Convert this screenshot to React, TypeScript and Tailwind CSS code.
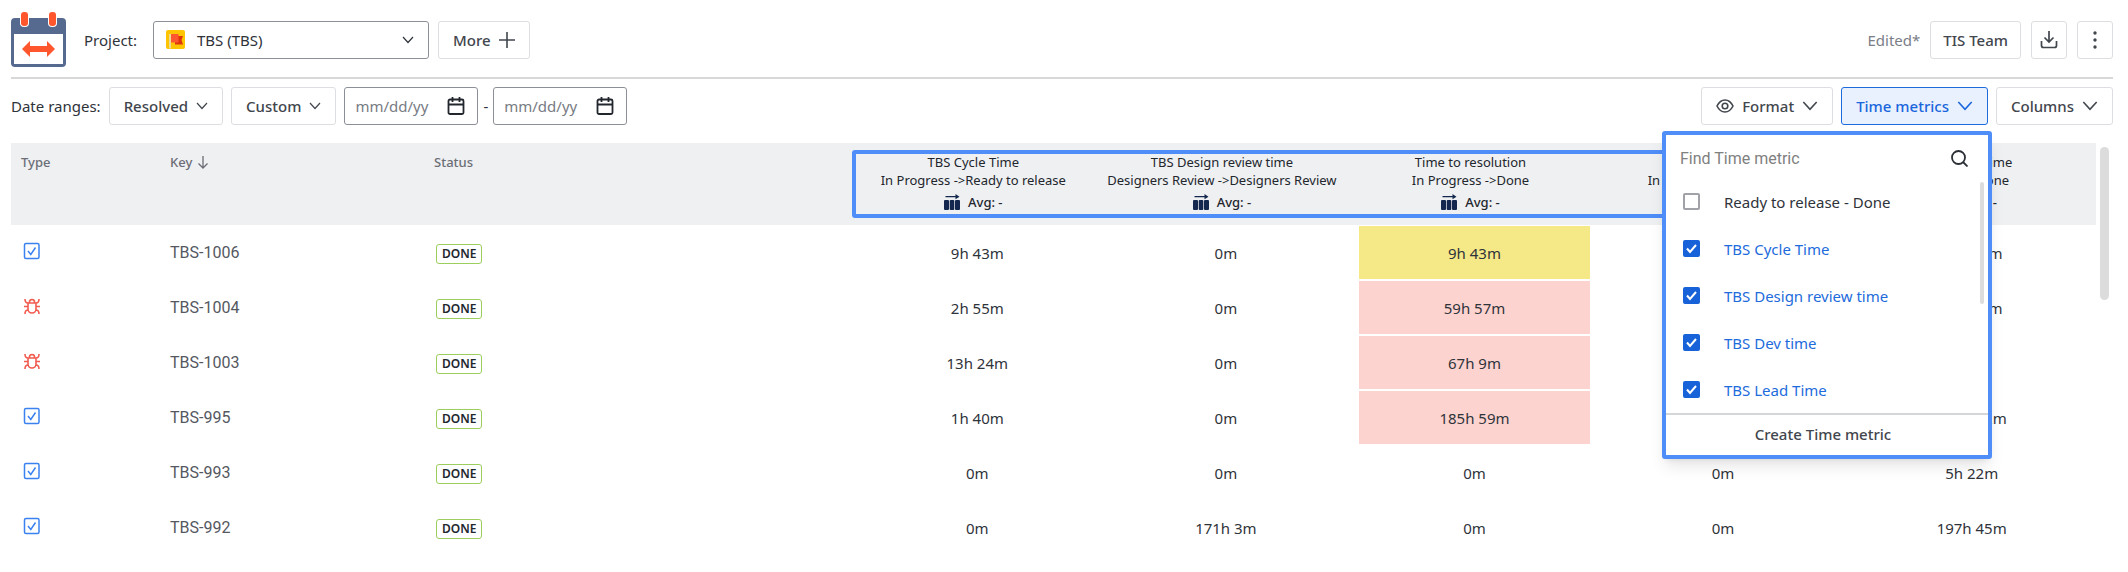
import { useState } from 'react';
import type { ReactNode } from 'react';

type Row = {
  type: 'task' | 'bug';
  key: string;
  times: string[];
  tone?: 'yellow' | 'red';
};

const metrics = [
  { name: 'TBS Cycle Time', range: 'In Progress ->Ready to release' },
  { name: 'TBS Design review time', range: 'Designers Review ->Designers Review' },
  { name: 'Time to resolution', range: 'In Progress ->Done' },
  { name: 'TBS Dev time', range: 'In Progress ->In Review' },
  { name: 'TBS Lead Time', range: 'To Do ->Done' },
];

const rows: Row[] = [
  { type: 'task', key: 'TBS-1006', times: ['9h 43m', '0m', '9h 43m', '0m', '10h 43m'], tone: 'yellow' },
  { type: 'bug', key: 'TBS-1004', times: ['2h 55m', '0m', '59h 57m', '0m', '62h 38m'], tone: 'red' },
  { type: 'bug', key: 'TBS-1003', times: ['13h 24m', '0m', '67h 9m', '0m', '0m'], tone: 'red' },
  { type: 'task', key: 'TBS-995', times: ['1h 40m', '0m', '185h 59m', '0m', '187h 42m'], tone: 'red' },
  { type: 'task', key: 'TBS-993', times: ['0m', '0m', '0m', '0m', '5h 22m'] },
  { type: 'task', key: 'TBS-992', times: ['0m', '171h 3m', '0m', '0m', '197h 45m'] },
];

const options = ['Ready to release - Done', 'TBS Cycle Time', 'TBS Design review time', 'TBS Dev time', 'TBS Lead Time'];

const Logo = () => (
  <svg width="55" height="55" viewBox="0 0 55 55" className="shrink-0">
    <rect x="0" y="6" width="55" height="49" rx="4" fill="#56698f" />
    <rect x="3" y="22" width="49" height="30" fill="#fff" />
    <rect x="9" y="-1" width="9" height="16" rx="4" fill="#fff" />
    <rect x="37" y="-1" width="9" height="16" rx="4" fill="#fff" />
    <rect x="10" y="0" width="7" height="14" rx="3" fill="#ff562d" />
    <rect x="38" y="0" width="7" height="14" rx="3" fill="#ff562d" />
    <path d="M11 37l8-8v5h17v-5l8 8-8 8v-5H19v5z" fill="#ff562d" />
  </svg>
);

const ProjectIcon = () => (
  <svg width="19" height="19" viewBox="0 0 19 19" className="shrink-0">
    <rect width="19" height="19" rx="2" fill="#ffc400" />
    <path d="M4 4v14.500" stroke="#e6e3c4" strokeWidth="1.500" />
    <path d="M9 6h8l-1.500 4 1.500 4.500H9z" fill="#de350b" />
    <path d="M5 4h7.500v8.500H5z" fill="#ff5630" />
  </svg>
);

const Chevron = ({ size = 12 }: { size?: number }) => (
  <svg width={size} height={size} viewBox="0 0 12 12" fill="none" stroke="currentColor" strokeWidth="1.200" className="shrink-0">
    <path d="M1 3l5 5.500L11 3" />
  </svg>
);

const CalendarIcon = () => (
  <svg width="18" height="18" viewBox="0 0 18 18" fill="none" stroke="#22272e" strokeWidth="1.800" className="shrink-0">
    <rect x="1.500" y="2.500" width="15" height="14.500" rx="1.500" />
    <path d="M2 7.500h14M5.500 0v5M12.500 0v5" />
  </svg>
);

const TaskIcon = () => (
  <svg width="18" height="18" viewBox="0 0 18 18" fill="none" stroke="#3b82f0" strokeWidth="1.500" role="img" aria-label="Task">
    <rect x="1.500" y="1.500" width="14.500" height="15" rx="1.500" />
    <path d="M5 9l2.800 3.500L12.500 5.500" />
  </svg>
);

const BugIcon = () => (
  <svg width="18" height="18" viewBox="0 0 18 18" fill="none" stroke="#f15b50" strokeWidth="1.600" role="img" aria-label="Bug">
    <path d="M5 6h8v6a4 4 0 0 1-8 0zM6.300 6a2.700 3.500 0 0 1 5.400 0M1 9.500h4M13 9.500h4M2 2c0 3 1 4 3 4M16 2c0 3-1 4-3 4M2 17c0-3 1-4 3-4M16 17c0-3-1-4-3-4" />
  </svg>
);

const AvgIcon = () => (
  <svg width="16" height="16" viewBox="0 0 16 16" fill="#14284f" className="shrink-0">
    <rect x="0" y="6" width="5" height="10" rx="1" />
    <rect x="5.700" y="6" width="4.600" height="10" rx="1" />
    <rect x="11" y="6" width="5" height="10" rx="1" />
    <path d="M1.500 2h10V0l4 2.700-4 2.600V3.300h-10z" />
  </svg>
);

const Button = ({ children, className = 'px-3.5', label }: { children: ReactNode; className?: string; label?: string }) => (
  <button
    type="button"
    aria-label={label}
    className={`flex h-[38px] items-center justify-center gap-2 rounded-[3px] border border-[#dddee1] bg-white font-medium whitespace-nowrap text-[#42464d] ${className}`}
  >
    {children}
  </button>
);

const DateField = ({ label }: { label: string }) => (
  <label className="flex h-[38px] w-[134px] items-center rounded-[3px] border border-[#8c8f97] pr-3 pl-2">
    <input type="text" aria-label={label} placeholder="mm/dd/yy" className="w-full min-w-0 px-0.5 outline-none placeholder:text-[#777b83]" />
    <CalendarIcon />
  </label>
);

const MetricsMenu = () => {
  const [selected, setSelected] = useState(options.slice(1));

  const toggle = (name: string) => {
    setSelected(selected.includes(name) ? selected.filter((item) => item !== name) : [...selected, name]);
  };

  return (
    <div className="absolute top-full -right-1 z-20 mt-1.5 w-[330px] rounded-[3px] border-4 border-[#4f8df8] bg-white shadow-lg">
      <div className="flex h-[43px] items-center pt-1 pr-5 pl-3.5">
        <input
          type="text"
          aria-label="Find Time metric"
          placeholder="Find Time metric"
          className="w-full min-w-0 font-[Roboto,sans-serif] text-base outline-none placeholder:text-[#808080]"
        />
        <svg width="17" height="17" viewBox="0 0 17 17" fill="none" stroke="#2b2f36" strokeWidth="1.800" className="shrink-0">
          <circle cx="7.500" cy="7.500" r="6.500" />
          <path d="M12 12l4.500 4.500" />
        </svg>
      </div>
      <div className="relative">
        <ul>
          {options.map((name) => {
            const checked = selected.includes(name);
            return (
              <li key={name}>
                <label className={`flex h-[47px] items-center gap-6 pl-[17px] ${checked ? 'text-[#1d6bdc]' : 'text-[#2f333a]'}`}>
                  <span className="relative flex size-[17px]">
                    <input
                      type="checkbox"
                      checked={checked}
                      onChange={() => toggle(name)}
                      className="size-[17px] appearance-none rounded-[2px] border-2 border-[#a0a2a8] checked:border-[#1762d8] checked:bg-[#1762d8]"
                    />
                    {checked && (
                      <svg viewBox="0 0 17 17" fill="none" stroke="#fff" strokeWidth="2" className="pointer-events-none absolute inset-0">
                        <path d="M4 8.500l3 3.500L13 5" />
                      </svg>
                    )}
                  </span>
                  {name}
                </label>
              </li>
            );
          })}
        </ul>
        <div className="absolute top-1 right-1 h-[122px] w-1 rounded-full bg-[#dcdcdc]" />
      </div>
      <div className="border-t-2 border-[#d5d6d8] pr-2 pb-0.5">
        <button type="button" className="h-[38px] w-full font-medium text-[#42464d]">
          Create Time metric
        </button>
      </div>
    </div>
  );
};

const Toolbar = () => (
  <>
    <header className="flex items-center border-b-2 border-[#d8d8d9] pt-3 pb-2.5">
      <Logo />
      <span className="ml-[18px]">Project:</span>
      <button
        type="button"
        className="ml-4 flex h-[38px] w-[276px] items-center rounded-[3px] border border-[#8c8f97] pr-3.5 pl-3"
      >
        <ProjectIcon />
        <span className="ml-3 flex-1 text-left">TBS (TBS)</span>
        <Chevron />
      </button>
      <Button className="ml-[9px] px-3.5">
        More
        <svg width="16" height="16" viewBox="0 0 16 16" stroke="currentColor" strokeWidth="1.600">
          <path d="M8 0v16M0 8h16" />
        </svg>
      </Button>
      <div className="ml-auto flex items-center gap-2.5">
        <span className="text-[#7a7e87]">Edited*</span>
        <Button className="px-3">TIS Team</Button>
        <Button label="Download" className="w-9">
          <svg width="18" height="18" viewBox="0 0 18 18" fill="none" stroke="currentColor" strokeWidth="1.700" className="shrink-0">
            <path d="M9 0v11M4.500 6.500L9 11l4.500-4.500M1.500 10v4.500a2 2 0 0 0 2 2h11a2 2 0 0 0 2-2V10" />
          </svg>
        </Button>
        <Button label="More actions" className="w-9">
          <svg width="4" height="18" viewBox="0 0 4 18" fill="currentColor" className="shrink-0">
            <circle cx="2" cy="2" r="1.700" />
            <circle cx="2" cy="9" r="1.700" />
            <circle cx="2" cy="16" r="1.700" />
          </svg>
        </Button>
      </div>
    </header>
    <div className="flex items-center gap-2 pt-2 pb-[18px]">
      <span>Date ranges:</span>
      <Button>
        Resolved <Chevron />
      </Button>
      <Button>
        Custom <Chevron />
      </Button>
      <div className="flex items-center gap-[5px]">
        <DateField label="Start date" />
        <span>-</span>
        <DateField label="End date" />
      </div>
      <div className="ml-auto flex items-center gap-2">
        <Button>
          <svg width="18" height="18" viewBox="0 0 18 18" fill="none" stroke="currentColor" strokeWidth="1.600" className="shrink-0">
            <path d="M1 9c2-4 5-6 8-6s6 2 8 6c-2 4-5 6-8 6s-6-2-8-6z" />
            <circle cx="9" cy="9" r="2.800" />
          </svg>
          Format <Chevron size={16} />
        </Button>
        <div className="relative">
          <button
            type="button"
            aria-expanded="true"
            className="flex h-[38px] items-center gap-2 rounded-[3px] border border-[#1d6bdc] bg-[#e9f1fe] px-3.5 font-medium whitespace-nowrap text-[#1a66dc]"
          >
            Time metrics <Chevron size={16} />
          </button>
          <MetricsMenu />
        </div>
        <Button>
          Columns <Chevron size={16} />
        </Button>
      </div>
    </div>
  </>
);

const IssueTable = () => (
  <div className="flex gap-1">
    <table className="w-full table-fixed border-collapse">
      <thead className="bg-[#eff0f2]">
        <tr className="h-[82px] align-top text-[13px] leading-[18px]">
          <th className="w-[149px] px-2.5 pt-2.5 text-left font-medium text-[#6b6e76]">Type</th>
          <th className="w-[264px] px-2.5 pt-2.5 text-left font-medium text-[#6b6e76]">
            <span className="flex items-center gap-1.5">
              Key
              <svg width="10" height="13" viewBox="0 0 10 13" fill="none" stroke="currentColor" strokeWidth="1.300">
                <path d="M5 0v12M.5 7.500L5 12l4.500-4.500" />
              </svg>
            </span>
          </th>
          <th className="w-[429px] px-2.5 pt-2.5 text-left font-medium text-[#6b6e76]">Status</th>
          {metrics.map((metric, i) => (
            <th key={metric.name} className="relative pt-2.5 pr-2 font-normal whitespace-nowrap text-[#22262d]">
              {i === 0 && (
                <span className="absolute top-[7px] -left-px z-10 h-[68px] w-[400%] rounded-[3px] border-4 border-[#4f8df8]" />
              )}
              <div>{metric.name}</div>
              <div>{metric.range}</div>
              <div className="flex items-center justify-center gap-2 pt-1 font-medium">
                <AvgIcon /> Avg: -
              </div>
            </th>
          ))}
        </tr>
      </thead>
      <tbody>
        {rows.map((row) => (
          <tr key={row.key} className="h-[55px]">
            <td className="px-3 pb-1">{row.type === 'task' ? <TaskIcon /> : <BugIcon />}</td>
            <td className="px-2.5">
              <a href={`#${row.key}`} className="font-[Roboto,sans-serif] text-base text-[#55585f]">
                {row.key}
              </a>
            </td>
            <td className="px-3">
              <span className="inline-block rounded-[3px] border border-[#9cce5e] px-[5px] text-xs leading-[18px] font-semibold text-[#22272e]">
                DONE
              </span>
            </td>
            {row.times.map((time, i) => (
              <td key={i} className="px-[9px] pt-px text-center">
                <div
                  className={`flex h-[54px] items-center justify-center border-b border-white ${
                    i === 2 && row.tone === 'yellow' ? 'bg-[#f5e887]' : ''
                  } ${i === 2 && row.tone === 'red' ? 'bg-[#fdd3d0]' : ''}`}
                >
                  {time}
                </div>
              </td>
            ))}
          </tr>
        ))}
      </tbody>
    </table>
    <div className="mt-1 h-[153px] w-[9px] shrink-0 rounded-full bg-[#dcdcdc]" />
  </div>
);

const App = () => (
  <main className="bg-white pr-[15px] pl-[11px] font-['Noto_Sans',sans-serif] text-[15px] leading-5 text-[#2f333a]">
    <Toolbar />
    <div className="pr-1">
      <IssueTable />
    </div>
  </main>
);

export default App;
